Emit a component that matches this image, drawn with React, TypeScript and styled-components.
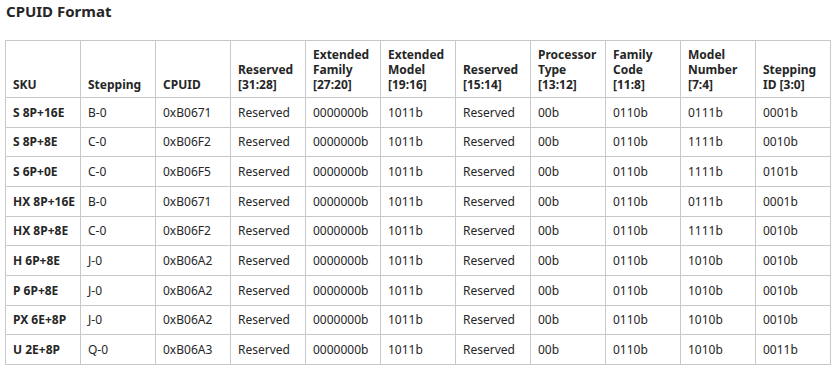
import * as React from 'react';
import styled, { createGlobalStyle } from 'styled-components';

const GlobalStyle = createGlobalStyle`
	body {
		margin: 0;
		background: #ffffff;
		font-family: "Noto Sans", "Open Sans", sans-serif;
		color: #262626;
	}
`;

const headers = [
	'SKU',
	'Stepping',
	'CPUID',
	'Reserved [31:28]',
	'Extended Family [27:20]',
	'Extended Model [19:16]',
	'Reserved [15:14]',
	'Processor Type [13:12]',
	'Family Code [11:8]',
	'Model Number [7:4]',
	'Stepping ID [3:0]',
];

const rows = [
	['S 8P+16E', 'B-0', '0xB0671', '0111b', '0001b'],
	['S 8P+8E', 'C-0', '0xB06F2', '1111b', '0010b'],
	['S 6P+0E', 'C-0', '0xB06F5', '1111b', '0101b'],
	['HX 8P+16E', 'B-0', '0xB0671', '0111b', '0001b'],
	['HX 8P+8E', 'C-0', '0xB06F2', '1111b', '0010b'],
	['H 6P+8E', 'J-0', '0xB06A2', '1010b', '0010b'],
	['P 6P+8E', 'J-0', '0xB06A2', '1010b', '0010b'],
	['PX 6E+8P', 'J-0', '0xB06A2', '1010b', '0010b'],
	['U 2E+8P', 'Q-0', '0xB06A3', '1010b', '0011b'],
];

export default function App() {
	return (
		<>
			<GlobalStyle />
			<Page>
				<Title>CPUID Format</Title>
				<Table>
					<thead>
						<tr>
							{headers.map((h) => (
								<Th key={h}>{h}</Th>
							))}
						</tr>
					</thead>
					<tbody>
						{rows.map(([sku, step, cpuid, model, sid]) => (
							<tr key={sku}>
								<Td bold>{sku}</Td>
								<Td>{step}</Td>
								<Td>{cpuid}</Td>
								<Td>Reserved</Td>
								<Td>0000000b</Td>
								<Td>1011b</Td>
								<Td>Reserved</Td>
								<Td>00b</Td>
								<Td>0110b</Td>
								<Td>{model}</Td>
								<Td>{sid}</Td>
							</tr>
						))}
					</tbody>
				</Table>
			</Page>
		</>
	);
}

const Page = styled.div`
	padding: 0 5px;
`;

const Title = styled.h2`
	margin: 0;
	padding: 0 0 0 1px;
	font-size: 15px;
	line-height: 22px;
	font-weight: 700;
	color: #262626;
	height: 40px;
`;

const Table = styled.table`
	width: 826px;
	table-layout: fixed;
	border-collapse: collapse;
	border: 1px solid #c8c8c8;
	font-size: 12px;
`;

const Th = styled.th`
	border: 1px solid #c8c8c8;
	text-align: left;
	vertical-align: bottom;
	font-weight: 700;
	line-height: 15px;
	padding: 5px 6px 5px 7px;
	height: 46px;
`;

const Td = styled.td<{ bold?: boolean }>`
	border: 1px solid #c8c8c8;
	text-align: left;
	font-weight: ${(p) => (p.bold ? 700 : 400)};
	padding: 0 6px 0 7px;
	height: 28.67px;
	line-height: 15px;
	white-space: nowrap;
`;
